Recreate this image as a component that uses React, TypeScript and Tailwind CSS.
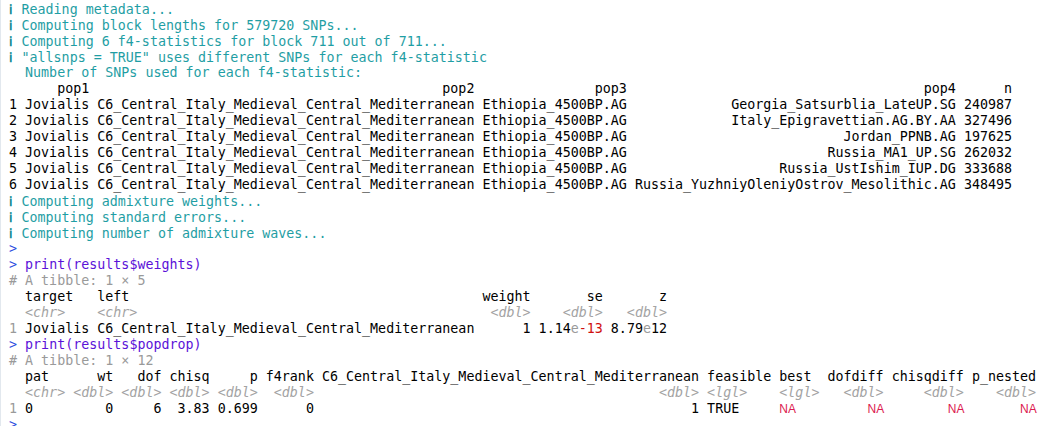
import React from "react";

const C6 = "C6_Central_Italy_Medieval_Central_Mediterranean";

const pop4 = [
  "Georgia_Satsurblia_LateUP.SG",
  "Italy_Epigravettian.AG.BY.AA",
  "Jordan_PPNB.AG",
  "Russia_MA1_UP.SG",
  "Russia_UstIshim_IUP.DG",
  "Russia_YuzhniyOleniyOstrov_Mesolithic.AG",
];
const counts = ["240987", "327496", "197625", "262032", "333688", "348495"];

const Line = ({ children, className = "" }: { children?: React.ReactNode; className?: string }) => (
  <div className={`h-[16px] leading-[16px] whitespace-pre ${className}`}>{children}</div>
);

const Info = ({ text }: { text: string }) => (
  <Line className="text-[#1f9ea4]">
    <span className="inline-block w-[12.5px] font-['DejaVu_Serif',serif] font-bold text-[#0f8a90]">ℹ</span>
    {text}
  </Line>
);

const Gray = ({ children }: { children: React.ReactNode }) => <span className="text-[#9a9a9a]">{children}</span>;

const Types = ({ text }: { text: string }) => (
  <Line className="italic text-[#a3a3a3]">{text}</Line>
);

const NA = () => (
  <span className="inline-block w-[16.06px] font-['Liberation_Sans',sans-serif] text-[12px] text-[#dc1a4f]">NA</span>
);

const Cmd = ({ text }: { text?: string }) => (
  <Line>
    <span className="text-[#2f4fe0]">{"> "}</span>
    <span className="text-[#5b12d8]">{text}</span>
  </Line>
);

export default function App() {
  const head =
    "  " +
    "pop1".padStart(8) + " " +
    "pop2".padStart(47) + " " +
    "pop3".padStart(18) + " " +
    "pop4".padStart(40) + " " +
    "n".padStart(6);

  const w1Head =
    "  " + "target".padEnd(8) + " " + "left".padEnd(47) + " " +
    "weight".padStart(6) + " " + "se".padStart(8) + " " + "z".padStart(7);
  const w1Types =
    "  " + "<chr>".padEnd(8) + " " + "<chr>".padEnd(47) + " " +
    "<dbl>".padStart(6) + " " + "<dbl>".padStart(8) + " " + "<dbl>".padStart(7);

  const p2Head =
    "  " + "pat".padEnd(5) + " " + "wt".padStart(5) + " " + "dof".padStart(5) + " " +
    "chisq".padStart(5) + " " + "p".padStart(5) + " " + "f4rank".padStart(6) + " " + C6 + " " +
    "feasible" + " " + "best".padEnd(5) + " " + "dofdiff".padStart(7) + " " +
    "chisqdiff".padStart(9) + " " + "p_nested".padStart(8);
  const p2Types =
    "  <chr> <dbl> <dbl> <dbl> <dbl>  <dbl> " + "<dbl>".padStart(47) + " " +
    "<lgl>".padEnd(8) + " " + "<lgl>" + " " + "<dbl>".padStart(7) + " " +
    "<dbl>".padStart(9) + " " + "<dbl>".padStart(8);
  const p2Row =
    " " + "0".padEnd(5) + " " + "0".padStart(5) + " " + "6".padStart(5) + " " +
    "3.83".padStart(5) + " " + "0.699" + " " + "0".padStart(6) + " " + "1".padStart(47) + " " +
    "TRUE".padEnd(8) + " ";

  return (
    <div className="h-[426px] w-[1064px] overflow-hidden bg-white border-l border-[#e2e8ee] pl-[8px] pt-[1.4px] font-['DejaVu_Sans_Mono',monospace] text-[13.34px] text-black">
      <Info text="Reading metadata..." />
      <Info text="Computing block lengths for 579720 SNPs..." />
      <Info text="Computing 6 f4-statistics for block 711 out of 711..." />
      <Info text={'"allsnps = TRUE" uses different SNPs for each f4-statistic'} />
      <Line className="text-[#1f9ea4]">{"  Number of SNPs used for each f4-statistic:"}</Line>
      <Line>{head}</Line>
      {pop4.map((p, i) => (
        <Line key={i}>
          {`${i + 1} Jovialis ${C6} Ethiopia_4500BP.AG ${p.padStart(40)} ${counts[i]}`}
        </Line>
      ))}
      <Info text="Computing admixture weights..." />
      <Info text="Computing standard errors..." />
      <Info text="Computing number of admixture waves..." />
      <Cmd />
      <Cmd text="print(results$weights)" />
      <Line className="text-[#9a9a9a]">{"# A tibble: 1 × 5"}</Line>
      <Line>{w1Head}</Line>
      <Types text={w1Types} />
      <Line>
        <Gray>1</Gray>
        {` Jovialis ${C6} ${"1".padStart(6)} 1.14`}
        <Gray>e</Gray>
        <span className="text-[#d01010]">-13</span>
        {" 8.79"}
        <Gray>e</Gray>
        {"12"}
      </Line>
      <Cmd text="print(results$popdrop)" />
      <Line className="text-[#9a9a9a]">{"# A tibble: 1 × 12"}</Line>
      <Line>{p2Head}</Line>
      <Types text={p2Types} />
      <Line>
        <Gray>1</Gray>
        {p2Row}
        <NA />
        {" ".repeat(9)}
        <NA />
        {" ".repeat(8)}
        <NA />
        {" ".repeat(7)}
        <NA />
      </Line>
      <Cmd />
    </div>
  );
}
